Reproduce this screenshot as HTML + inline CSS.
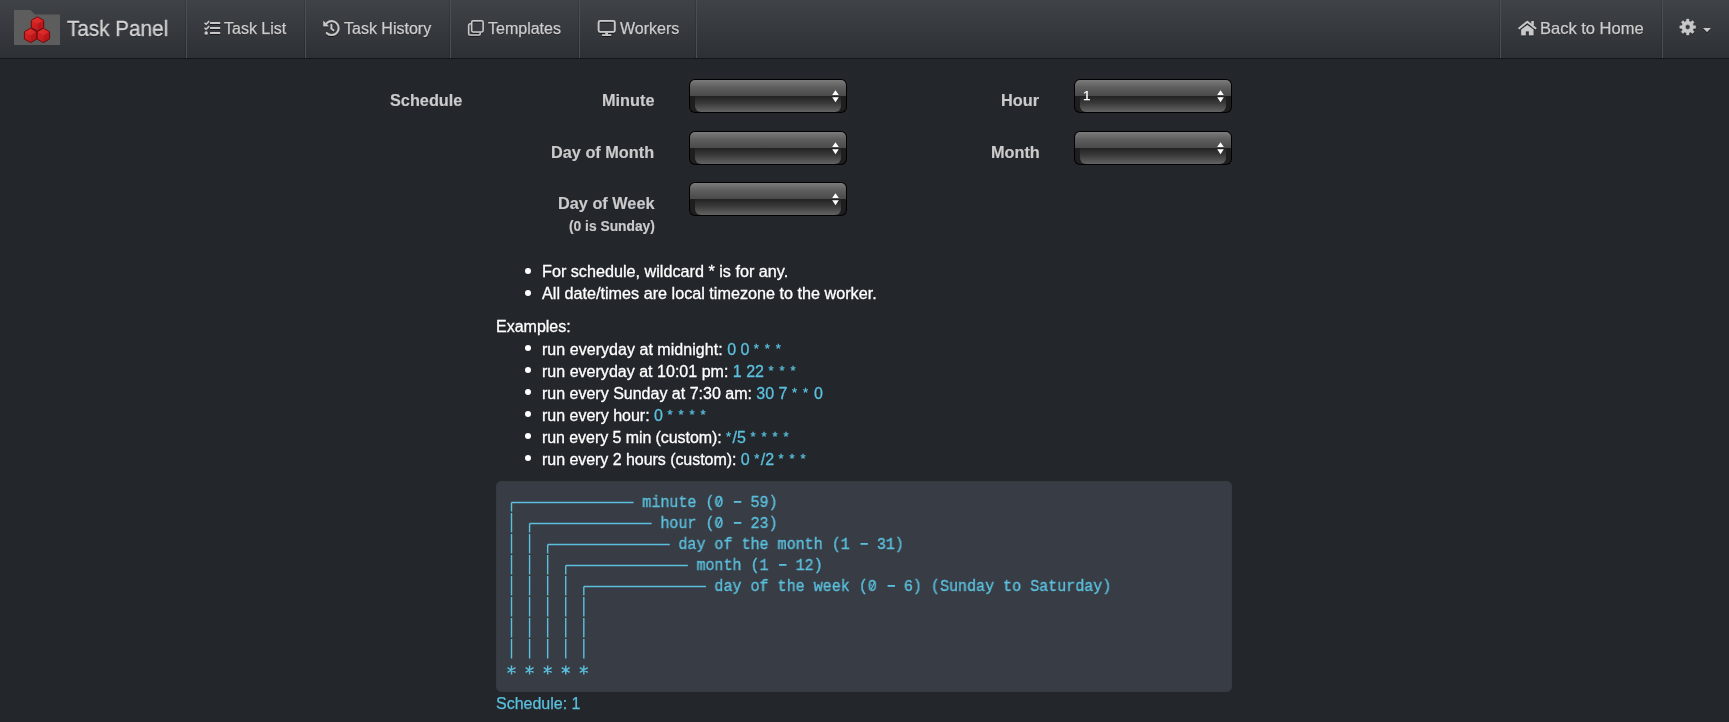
<!DOCTYPE html>
<html>
<head>
<meta charset="utf-8">
<style>
html,body{margin:0;padding:0;}
body{width:1729px;height:722px;overflow:hidden;position:relative;background:#23262b;font-family:"Liberation Sans",sans-serif;}
.a{position:absolute;}
.t{position:absolute;white-space:pre;line-height:1;will-change:transform;}
#nav{position:absolute;left:0;top:0;width:1729px;height:58px;background:linear-gradient(#3f4348,#2d3034);border-bottom:1px solid #151719;}
.dv{position:absolute;top:0;width:1px;height:58px;background:#4b4f54;box-shadow:-1px 0 0 rgba(0,0,0,.12);}
.nt{color:#cdcdcd;font-size:16px;text-shadow:0 1px 0.5px rgba(0,0,0,.6);-webkit-text-stroke:0.25px currentColor;}
.lb{color:#cbcbcb;font-weight:bold;font-size:16.3px;-webkit-text-stroke:0.15px currentColor;}
.sel{position:absolute;width:158px;height:34px;border-radius:6px;background:#000;}
.sel .up{position:absolute;left:1px;top:1px;right:1px;height:16px;border-radius:5px 5px 0 0;background:linear-gradient(#7c7c7c,#5e5e5e 45%,#4a4a4a);}
.sel .lo{position:absolute;left:1px;top:17px;right:1px;height:16px;border-radius:0 0 5px 5px;background:#1e1e1e;}
.sel .li{position:absolute;left:5px;top:0;right:5px;bottom:0;border-radius:0 0 6px 6px;background:linear-gradient(#222,#3a3a3a 45%,#636363);}
.sel .ar{position:absolute;right:8px;top:10.5px;}
.tx{color:#fff;font-size:16px;-webkit-text-stroke:0.3px currentColor;}
.tx2{font-size:16.2px;}
.cy{color:#5bc0de;}
.as{font-style:normal;font-size:13px;vertical-align:2.5px;letter-spacing:1.5px;}
.bul{position:absolute;width:6px;height:6px;border-radius:50%;background:#fff;}
#pre{position:absolute;left:496px;top:481px;width:734px;height:208.5px;background:#383c44;border:1px solid #353940;border-radius:5px;}
.pl{will-change:transform;position:absolute;left:10.2px;font-family:"Liberation Mono",monospace;font-size:16px;transform:scaleX(0.9394);transform-origin:0 0;-webkit-text-stroke:0.35px currentColor;line-height:21px;color:#5bc0de;white-space:pre;}
</style>
</head>
<body>
<div id="nav">
  <div class="dv" style="left:186px"></div>
  <div class="dv" style="left:305px"></div>
  <div class="dv" style="left:450px"></div>
  <div class="dv" style="left:579px"></div>
  <div class="dv" style="left:696px"></div>
  <div class="dv" style="left:1500px"></div>
  <div class="dv" style="left:1662px"></div>
  <div class="t" style="left:67px;top:18px;font-size:22px;color:#d4d4d4;text-shadow:0 1px 0.5px rgba(0,0,0,.55);-webkit-text-stroke:0.3px currentColor;transform:scaleX(0.94);transform-origin:0 0">Task Panel</div>
  <div class="t nt" style="left:224px;top:21px">Task List</div>
  <div class="t nt" style="left:343.5px;top:21px">Task History</div>
  <div class="t nt" style="left:488px;top:21px">Templates</div>
  <div class="t nt" style="left:619.5px;top:21px">Workers</div>
  <div class="t nt" style="left:1540px;top:20px;font-size:16.5px">Back to Home</div>
</div>
<svg class="a" style="left:0;top:0" width="1729" height="60" viewBox="0 0 1729 60">
  <defs>
    <linearGradient id="cg" x1="0" y1="0" x2="1" y2="1">
      <stop offset="0" stop-color="#f03a3a"/><stop offset="0.45" stop-color="#d41c1e"/><stop offset="1" stop-color="#a81216"/>
    </linearGradient>
    <filter id="sh" x="-20%" y="-20%" width="140%" height="160%"><feDropShadow dx="0" dy="1" stdDeviation="0.3" flood-color="#000" flood-opacity="0.6"/></filter>
  </defs>
  <path d="M14 10 H30.5 L35 14.5 H60 V45 H14 Z" fill="#5d5d5d"/>
  <path d="M37.50 16.80 L43.74 20.40 L37.50 24.00 L31.26 20.40Z" fill="#e32c2c"/><path d="M31.26 20.40 L37.50 24.00 L37.50 31.20 L31.26 27.60Z" fill="#d01d1e"/><path d="M43.74 20.40 L43.74 27.60 L37.50 31.20 L37.50 24.00Z" fill="#b51618"/><path d="M37.50 16.80 L43.74 20.40 L43.74 27.60 L37.50 31.20 L31.26 27.60 L31.26 20.40Z" fill="url(#cg)" fill-opacity="0.35" stroke="#6e0a0b" stroke-width="1" stroke-linejoin="round"/><path d="M30.65 28.20 L36.89 31.80 L30.65 35.40 L24.41 31.80Z" fill="#e32c2c"/><path d="M24.41 31.80 L30.65 35.40 L30.65 42.60 L24.41 39.00Z" fill="#d01d1e"/><path d="M36.89 31.80 L36.89 39.00 L30.65 42.60 L30.65 35.40Z" fill="#b51618"/><path d="M30.65 28.20 L36.89 31.80 L36.89 39.00 L30.65 42.60 L24.41 39.00 L24.41 31.80Z" fill="url(#cg)" fill-opacity="0.35" stroke="#6e0a0b" stroke-width="1" stroke-linejoin="round"/><path d="M43.35 28.20 L49.59 31.80 L43.35 35.40 L37.11 31.80Z" fill="#e32c2c"/><path d="M37.11 31.80 L43.35 35.40 L43.35 42.60 L37.11 39.00Z" fill="#d01d1e"/><path d="M49.59 31.80 L49.59 39.00 L43.35 42.60 L43.35 35.40Z" fill="#b51618"/><path d="M43.35 28.20 L49.59 31.80 L49.59 39.00 L43.35 42.60 L37.11 39.00 L37.11 31.80Z" fill="url(#cg)" fill-opacity="0.35" stroke="#6e0a0b" stroke-width="1" stroke-linejoin="round"/>
  <g fill="#c8c8c8" stroke="#c8c8c8" filter="url(#sh)">
    <!-- tasks -->
    <g stroke="none"><rect x="210" y="22" width="10.2" height="2.1" rx="0.5"/><rect x="210" y="27" width="10.2" height="2.1" rx="0.5"/><rect x="210" y="32" width="10.2" height="2.1" rx="0.5"/><circle cx="206.2" cy="33" r="1.7"/></g>
    <path d="M204.5 22.7 L206.1 24.2 L209.2 21.1 M204.5 27.7 L206.1 29.2 L209.2 26.1" fill="none" stroke-width="1.5"/>
    <!-- history -->
    <path d="M326.8 23.0 A7 7 0 1 1 326.7 33.0" fill="none" stroke-width="1.9" stroke-linecap="round"/>
    <path d="M323.3 20.6 V26.2 H328.9 Z" stroke="none"/>
    <path d="M331.4 24.6 V28.6 L333.5 30.2" fill="none" stroke-width="1.8" stroke-linecap="round"/>
    <!-- clone -->
    <rect x="471.65" y="20.65" width="11.5" height="11.3" rx="1.6" fill="none" stroke-width="1.5"/>
    <path d="M471.1 23.75 H470.3 A1.6 1.6 0 0 0 468.65 25.35 V33.45 A1.6 1.6 0 0 0 470.25 35.05 H478.65 A1.6 1.6 0 0 0 480.25 33.45 V32.6" fill="none" stroke-width="1.5"/>
    <!-- desktop -->
    <rect x="598.6" y="20.8" width="16.2" height="11" rx="1.5" fill="none" stroke-width="1.8"/>
    <rect x="605.3" y="32.5" width="2.7" height="2.2" stroke="none"/>
    <rect x="601.8" y="34.3" width="9.6" height="1.7" rx="0.8" stroke="none"/>
    <!-- home -->
    <path d="M1519.2 28.2 L1527.3 21.8 L1535.5 28.2" fill="none" stroke-width="2" stroke-linecap="round" stroke-linejoin="round"/>
    <rect x="1531.3" y="21" width="2.5" height="4" stroke="none"/>
    <path d="M1521.2 29.6 L1527.3 24.9 L1533.5 29.6 V35.2 H1528.9 V31.2 H1525.8 V35.2 H1521.2 Z" stroke="none"/>
    <!-- gear -->
    <path d="M1686.37 21.25 L1686.51 19.09 L1688.89 19.09 L1689.03 21.25 L1690.82 21.99 L1692.45 20.56 L1694.14 22.25 L1692.71 23.88 L1693.45 25.67 L1695.61 25.81 L1695.61 28.19 L1693.45 28.33 L1692.71 30.12 L1694.14 31.75 L1692.45 33.44 L1690.82 32.01 L1689.03 32.75 L1688.89 34.91 L1686.51 34.91 L1686.37 32.75 L1684.58 32.01 L1682.95 33.44 L1681.26 31.75 L1682.69 30.12 L1681.95 28.33 L1679.79 28.19 L1679.79 25.81 L1681.95 25.67 L1682.69 23.88 L1681.26 22.25 L1682.95 20.56 L1684.58 21.99ZM1690.10 27.00A2.4 2.4 0 1 0 1685.30 27.00A2.4 2.4 0 1 0 1690.10 27.00Z" stroke="#c8c8c8" stroke-width="0.4" stroke-linejoin="round" fill-rule="evenodd"/>
    <path d="M1703 28 H1711 L1707 32 Z" stroke="none"/>
  </g>
</svg>

<div class="t lb" style="left:390px;top:92px">Schedule</div>
<div class="t lb" style="right:1074.5px;top:92px">Minute</div>
<div class="t lb" style="right:1074.5px;top:144px">Day of Month</div>
<div class="t lb" style="right:1074.5px;top:195px">Day of Week</div>
<div class="t lb" style="right:1074.5px;top:219.5px;font-size:13.8px">(0 is Sunday)</div>
<div class="t lb" style="right:690px;top:92px">Hour</div>
<div class="t lb" style="right:689.5px;top:144px">Month</div>

<div class="sel" style="left:689px;top:79px"><div class="up"></div><div class="lo"><div class="li"></div></div><svg class="ar" width="7" height="13" viewBox="0 0 7 13"><path d="M3.5 0.2 L6.8 5 H0.2 Z M0.2 7.2 H6.8 L3.5 12.2 Z" fill="#fff"/></svg></div>
<div class="sel" style="left:689px;top:131px"><div class="up"></div><div class="lo"><div class="li"></div></div><svg class="ar" width="7" height="13" viewBox="0 0 7 13"><path d="M3.5 0.2 L6.8 5 H0.2 Z M0.2 7.2 H6.8 L3.5 12.2 Z" fill="#fff"/></svg></div>
<div class="sel" style="left:689px;top:182px"><div class="up"></div><div class="lo"><div class="li"></div></div><svg class="ar" width="7" height="13" viewBox="0 0 7 13"><path d="M3.5 0.2 L6.8 5 H0.2 Z M0.2 7.2 H6.8 L3.5 12.2 Z" fill="#fff"/></svg></div>
<div class="sel" style="left:1074px;top:79px"><div class="up"></div><div class="lo"><div class="li"></div></div><svg class="ar" width="7" height="13" viewBox="0 0 7 13"><path d="M3.5 0.2 L6.8 5 H0.2 Z M0.2 7.2 H6.8 L3.5 12.2 Z" fill="#fff"/></svg><div class="t" style="left:9px;top:9.5px;font-size:13.5px;color:#fff;-webkit-text-stroke:0.25px #fff">1</div></div>
<div class="sel" style="left:1074px;top:131px"><div class="up"></div><div class="lo"><div class="li"></div></div><svg class="ar" width="7" height="13" viewBox="0 0 7 13"><path d="M3.5 0.2 L6.8 5 H0.2 Z M0.2 7.2 H6.8 L3.5 12.2 Z" fill="#fff"/></svg></div>


<div class="bul" style="left:525px;top:268px"></div>
<div class="t tx tx2" style="left:541.5px;top:263px">For schedule, wildcard * is for any.</div>
<div class="bul" style="left:525px;top:290px"></div>
<div class="t tx tx2" style="left:541.5px;top:285px">All date/times are local timezone to the worker.</div>
<div class="t tx" style="left:496px;top:319px">Examples:</div>
<div class="bul" style="left:525px;top:345px"></div>
<div class="t tx" style="left:541.5px;top:341px;letter-spacing:0.04px">run everyday at midnight: <span class="cy" style="letter-spacing:0">0 0 <i class="as">*</i> <i class="as">*</i> <i class="as">*</i></span></div>
<div class="bul" style="left:525px;top:367px"></div>
<div class="t tx" style="left:541.5px;top:363px;letter-spacing:0.02px">run everyday at 10:01 pm: <span class="cy" style="letter-spacing:0">1 22 <i class="as">*</i> <i class="as">*</i> <i class="as">*</i></span></div>
<div class="bul" style="left:525px;top:389px"></div>
<div class="t tx" style="left:541.5px;top:385px">run every Sunday at 7:30 am: <span class="cy" style="letter-spacing:0">30 7 <i class="as">*</i> <i class="as">*</i> 0</span></div>
<div class="bul" style="left:525px;top:411px"></div>
<div class="t tx" style="left:541.5px;top:407px">run every hour: <span class="cy" style="letter-spacing:0">0 <i class="as">*</i> <i class="as">*</i> <i class="as">*</i> <i class="as">*</i></span></div>
<div class="bul" style="left:525px;top:433px"></div>
<div class="t tx" style="left:541.5px;top:429px;letter-spacing:-0.07px">run every 5 min (custom): <span class="cy" style="letter-spacing:0"><i class="as">*</i>/5 <i class="as">*</i> <i class="as">*</i> <i class="as">*</i> <i class="as">*</i></span></div>
<div class="bul" style="left:525px;top:455px"></div>
<div class="t tx" style="left:541.5px;top:451px;letter-spacing:-0.046px">run every 2 hours (custom): <span class="cy" style="letter-spacing:0">0 <i class="as">*</i>/2 <i class="as">*</i> <i class="as">*</i> <i class="as">*</i></span></div>

<div id="pre"><div class="pl" style="top:10.5px">               minute (0   59)
                 hour (0   23)
                   day of the month (1   31)
                     month (1   12)
                       day of the week (0   6) (Sunday to Saturday)</div></div>
<svg class="a" style="left:0;top:0" width="1729" height="722" viewBox="0 0 1729 722">
  <path d="M511.50 502.50H633.60M511.50 502.50V511.60M511.50 512.90V532.60M511.50 533.90V553.60M511.50 554.90V574.60M511.50 575.90V595.60M511.50 596.90V616.60M511.50 617.90V637.60M511.50 638.90V658.60M529.58 523.50H651.68M529.58 523.50V532.60M529.58 533.90V553.60M529.58 554.90V574.60M529.58 575.90V595.60M529.58 596.90V616.60M529.58 617.90V637.60M529.58 638.90V658.60M547.66 544.50H669.76M547.66 544.50V553.60M547.66 554.90V574.60M547.66 575.90V595.60M547.66 596.90V616.60M547.66 617.90V637.60M547.66 638.90V658.60M565.74 565.50H687.84M565.74 565.50V574.60M565.74 575.90V595.60M565.74 596.90V616.60M565.74 617.90V637.60M565.74 638.90V658.60M583.82 586.50H705.92M583.82 586.50V595.60M583.82 596.90V616.60M583.82 617.90V637.60M583.82 638.90V658.60" fill="none" stroke="#5bc0de" stroke-width="1.4"/>
  <g fill="#383c44"><rect x="718.02" y="499.40" width="2.6" height="4.2"/><rect x="718.02" y="520.40" width="2.6" height="4.2"/><rect x="871.70" y="583.40" width="2.6" height="4.2"/></g>
  <g fill="#5bc0de"><rect x="733.90" y="501.00" width="7.4" height="1.8"/><rect x="733.90" y="522.00" width="7.4" height="1.8"/><rect x="860.46" y="543.00" width="7.4" height="1.8"/><rect x="779.10" y="564.00" width="7.4" height="1.8"/><rect x="887.58" y="585.00" width="7.4" height="1.8"/></g>
  <path d="M717.42 505.20L721.42 497.40M717.42 526.20L721.42 518.40M871.10 589.20L875.10 581.40" stroke="#5bc0de" stroke-width="1.2" fill="none"/>
  <path d="M511.50 665.40V674.60M507.52 667.70L515.48 672.30M507.52 672.30L515.48 667.70M529.58 665.40V674.60M525.60 667.70L533.56 672.30M525.60 672.30L533.56 667.70M547.66 665.40V674.60M543.68 667.70L551.64 672.30M543.68 672.30L551.64 667.70M565.74 665.40V674.60M561.76 667.70L569.72 672.30M561.76 672.30L569.72 667.70M583.82 665.40V674.60M579.84 667.70L587.80 672.30M579.84 672.30L587.80 667.70" fill="none" stroke="#5bc0de" stroke-width="1.4"/>
</svg>
<div class="t" style="left:496px;top:696px;font-size:16px;color:#5bc0de;-webkit-text-stroke:0.25px currentColor">Schedule: 1</div>
</body>
</html>
